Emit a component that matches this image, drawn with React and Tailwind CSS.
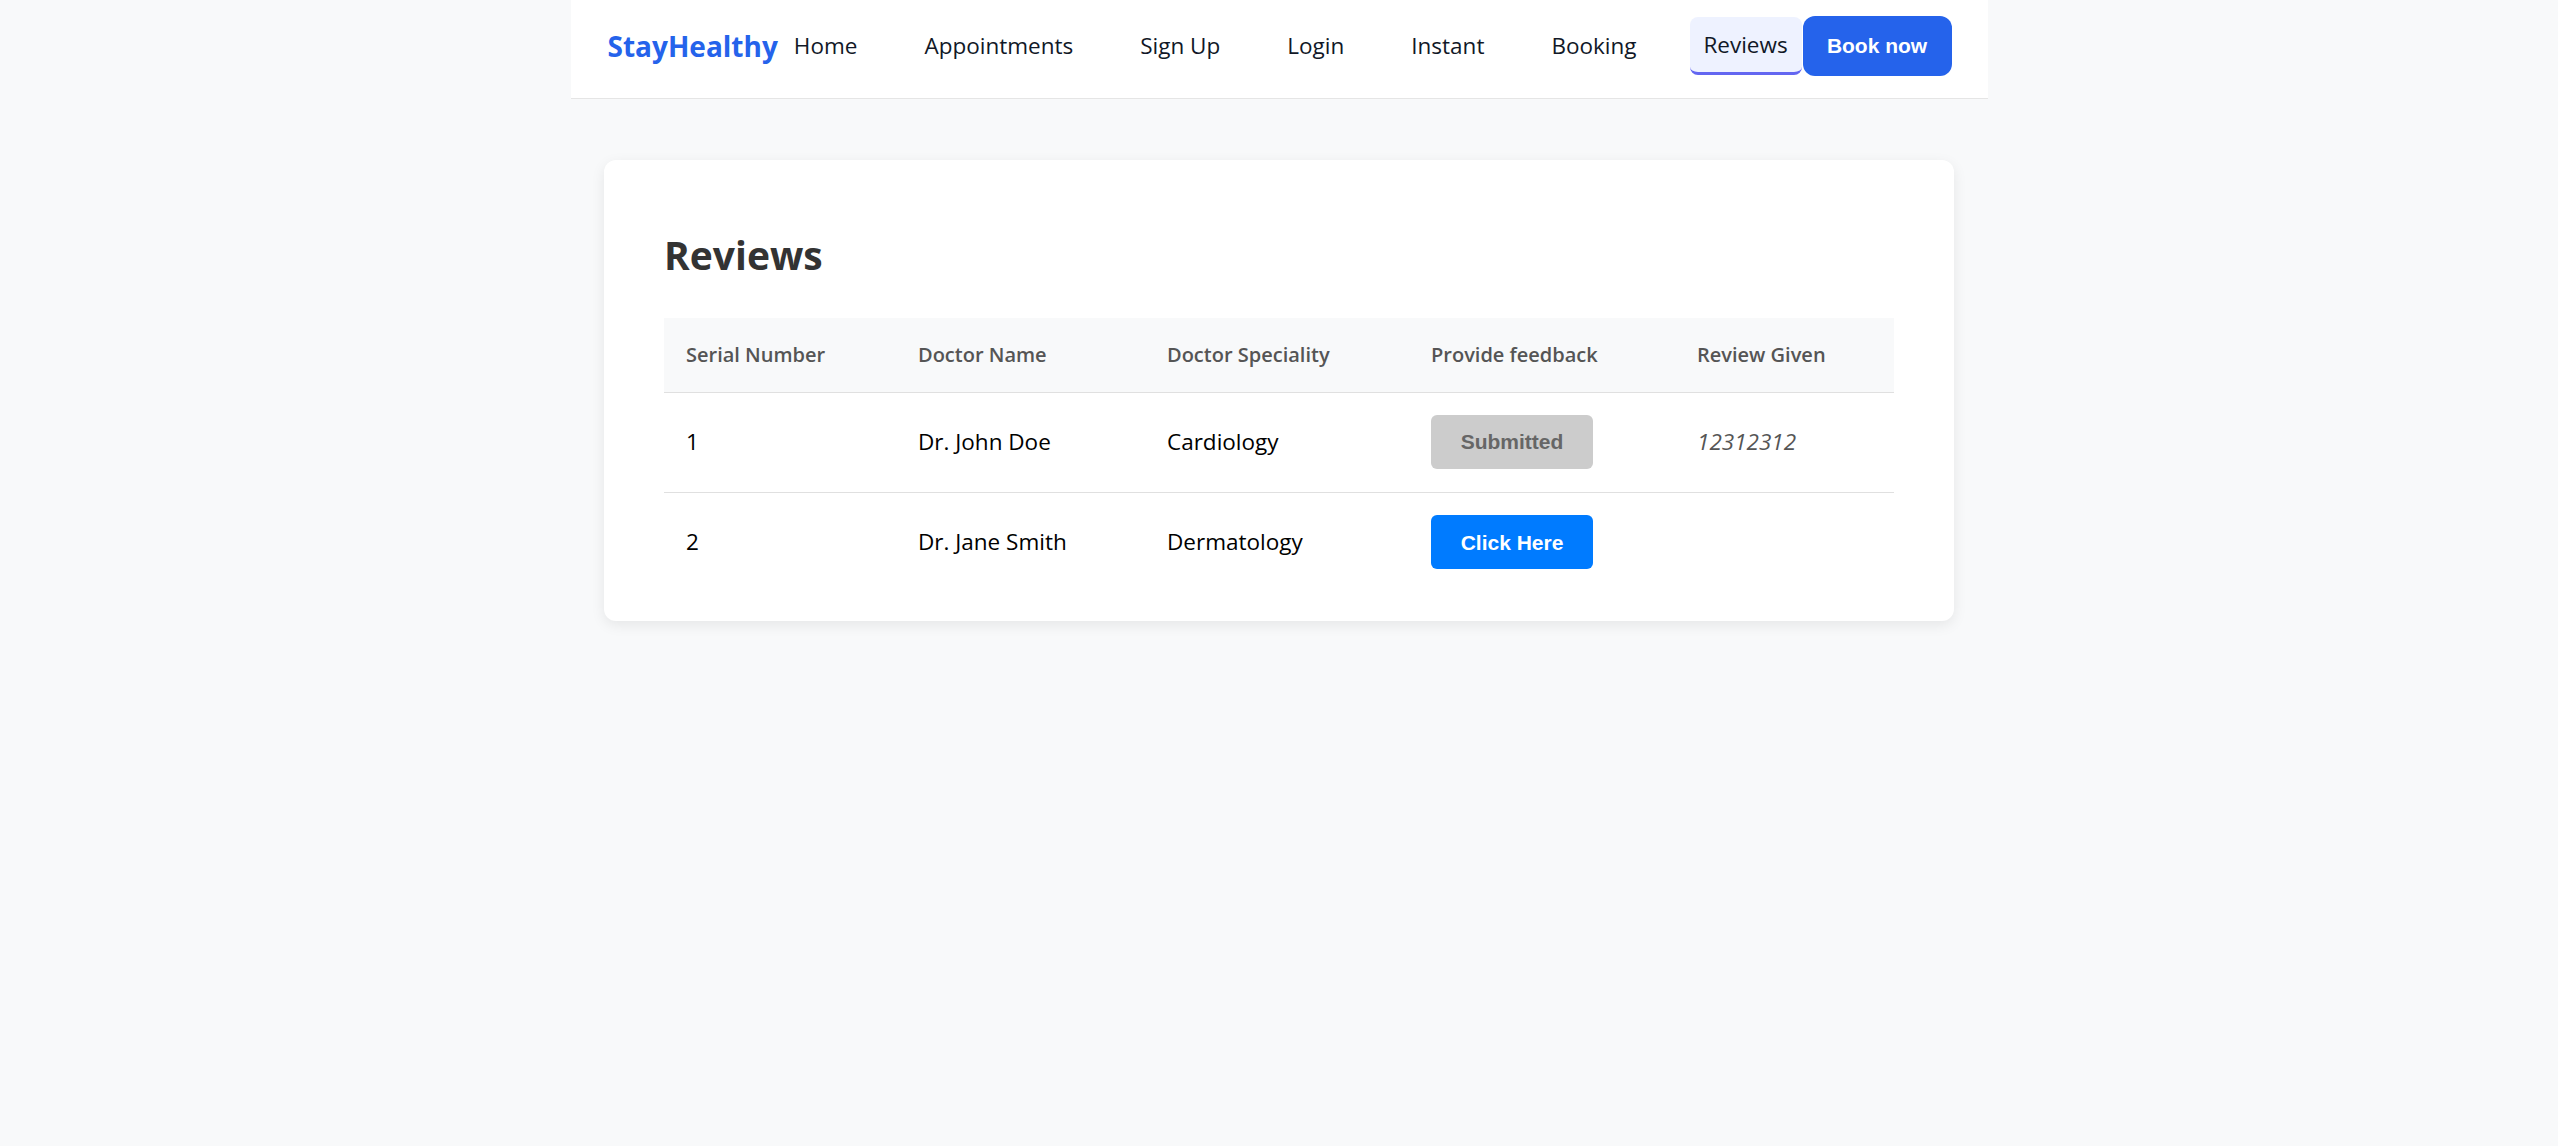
import React from "react";

const links = ["Home", "Appointments", "Sign Up", "Login", "Instant", "Booking"];

const reviews = [
  { id: 1, name: "Dr. John Doe", speciality: "Cardiology", submitted: true, review: "12312312" },
  { id: 2, name: "Dr. Jane Smith", speciality: "Dermatology", submitted: false, review: "" },
];

const Navbar = () => (
  <nav className="mx-auto flex h-[99px] w-[1417px] items-center whitespace-nowrap border-b border-[#e5e5e5] bg-white px-[37px] pb-[6px]">
    <span className="shrink-0 text-[28px] font-bold text-[#2563eb]">StayHealthy</span>
    <ul className="flex shrink-0 items-center gap-[35px]">
      {links.map((link) => (
        <li key={link}>
          <a href="#" className="block px-[16px] text-[22.5px] text-[#111827]">
            {link}
          </a>
        </li>
      ))}
      <li className="ml-[2px]">
        <a
          href="#"
          className="flex h-[58px] w-[112px] items-center justify-center rounded-[8px] border-b-[3px] border-[#6366f1] bg-[#eef2ff] text-[22.5px] text-[#111827]"
        >
          Reviews
        </a>
      </li>
    </ul>
    <button className="ml-px h-[60px] w-[149px] shrink-0 rounded-[12px] bg-[#2563eb] font-['Liberation_Sans',Arial,sans-serif] text-[21px] font-bold text-white">
      Book now
    </button>
  </nav>
);

const ReviewTable = () => (
  <table className="w-[1230px] table-fixed border-collapse whitespace-nowrap text-left">
    <colgroup>
      <col className="w-[232px]" />
      <col className="w-[249px]" />
      <col className="w-[264px]" />
      <col className="w-[266px]" />
      <col className="w-[219px]" />
    </colgroup>
    <thead>
      <tr className="h-[74px] border-b border-[#e0e0e0] bg-[#f8f9fa]">
        {["Serial Number", "Doctor Name", "Doctor Speciality", "Provide feedback", "Review Given"].map((h) => (
          <th key={h} className="pl-[22px] text-[20px] font-semibold text-[#555]">
            {h}
          </th>
        ))}
      </tr>
    </thead>
    <tbody>
      {reviews.map((row, index) => (
        <tr
          key={row.id}
          className={
            index < reviews.length - 1
              ? "h-[100px] border-b border-[#e0e0e0] text-[22.5px] text-black"
              : "h-[100px] text-[22.5px] text-black"
          }
        >
          <td className="pl-[22px]">{row.id}</td>
          <td className="pl-[22px]">{row.name}</td>
          <td className="pl-[22px]">{row.speciality}</td>
          <td className="pl-[22px]">
            {row.submitted ? (
              <button className="h-[54px] w-[162px] rounded-[6px] bg-[#cccccc] font-['Liberation_Sans',Arial,sans-serif] text-[21px] font-bold text-[#666]">
                Submitted
              </button>
            ) : (
              <button className="h-[54px] w-[162px] rounded-[6px] bg-[#007bff] font-['Liberation_Sans',Arial,sans-serif] text-[21px] font-bold text-white">
                Click Here
              </button>
            )}
          </td>
          <td className="pl-[22px] italic text-[#555]">{row.review}</td>
        </tr>
      ))}
    </tbody>
  </table>
);

export default function App() {
  return (
    <div className="min-h-screen bg-[#f8f9fa] font-['Open_Sans','Noto_Sans',sans-serif]">
      <Navbar />
      <main className="mx-auto mt-[61px] w-[1350px] rounded-[12px] bg-white pb-[29px] pl-[60px] pr-[60px] pt-[72px] shadow-[0_4px_14px_rgba(0,0,0,0.08)]">
        <h2 className="mb-[40px] text-[39px] font-bold leading-[46px] text-[#333]">Reviews</h2>
        <ReviewTable />
      </main>
    </div>
  );
}
